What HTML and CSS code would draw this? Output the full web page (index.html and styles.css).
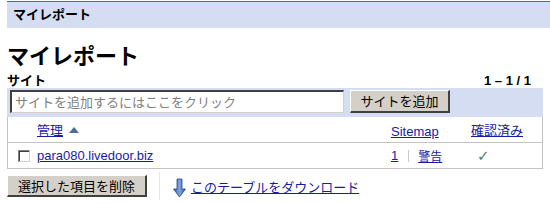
FILE: index.html
```html
<!DOCTYPE html>
<html lang="ja">
<head>
<meta charset="utf-8">
<title>マイレポート</title>
<link rel="stylesheet" href="styles.css">
</head>
<body>
<div class="topbar">マイレポート</div>
<main class="page">
  <h1 class="title">マイレポート</h1>
  <div class="subhead">
    <span class="subtitle">サイト</span>
    <span class="count">1 – 1 / 1</span>
  </div>
  <div class="addbar">
    <div class="input">サイトを追加するにはここをクリック</div>
    <button class="btn add-btn" type="button">サイトを追加</button>
  </div>
  <div class="table">
    <div class="row head">
      <div class="c-check"></div>
      <div class="c-name"><a href="#">管理</a><span class="sort"></span></div>
      <div class="c-sitemap"><a href="#">Sitemap</a></div>
      <div class="c-verified"><a href="#">確認済み</a></div>
    </div>
    <div class="row body">
      <div class="c-check"><span class="checkbox"></span></div>
      <div class="c-name"><a href="#">para080.livedoor.biz</a></div>
      <div class="c-sitemap"><a href="#">1</a><span class="sep"></span><a href="#" class="warn">警告</a></div>
      <div class="c-verified"><span class="tick">✓</span></div>
    </div>
  </div>
  <div class="actions">
    <button class="btn del-btn" type="button">選択した項目を削除</button>
    <span class="vsep"></span>
    <svg class="dl-icon" width="13" height="20" viewBox="0 0 13 20">
      <defs>
        <linearGradient id="g" x1="0" x2="1" y1="0" y2="0">
          <stop offset="0" stop-color="#2c5aa8"/>
          <stop offset="0.5" stop-color="#7ea6dc"/>
          <stop offset="1" stop-color="#2c5aa8"/>
        </linearGradient>
      </defs>
      <path d="M4 1 H9 V11 H12.5 L6.5 19 L0.5 11 H4 Z" fill="url(#g)" stroke="#1f4a8e" stroke-width="0.8"/>
    </svg>
    <a href="#" class="dl-link">このテーブルをダウンロード</a>
  </div>
</main>
</body>
</html>
```
FILE: styles.css
```css
* { box-sizing: border-box; }
html, body { margin: 0; padding: 0; background: #fff; }
body {
  font-family: "Liberation Sans", Arial, "Noto Sans CJK JP", sans-serif;
  font-size: 13px;
  color: #000;
}
a { color: #1a1aa8; text-decoration: underline; }

.topbar {
  margin: 1px 0 0 7px;
  height: 27px;
  border-top: 1px solid #4b6ea8;
  background: #d5ddf3;
  font-weight: bold;
  font-size: 13px;
  line-height: 26px;
  padding-left: 6px;
}

.page { margin: 0 7px; }

.title {
  margin: 15px 0 0;
  font-size: 22px;
  line-height: 28px;
  font-weight: bold;
}

.subhead {
  display: flex;
  justify-content: space-between;
  align-items: flex-end;
  font-weight: bold;
  line-height: 15px;
  margin-top: 2px;
}
.count { padding-right: 12px; }

.addbar {
  display: flex;
  align-items: center;
  gap: 6px;
  background: #d5ddf3;
  padding: 0 3px 3px 3px;
  height: 29px;
}
.input {
  width: 334px;
  height: 23px;
  background: #fff;
  border-top: 2px solid #404040;
  border-left: 2px solid #404040;
  border-right: 1px solid #d4d0c8;
  border-bottom: 1px solid #d4d0c8;
  color: #808080;
  line-height: 20px;
  padding-left: 3px;
  font-family: "Noto Sans CJK JP", sans-serif;
}
.btn {
  font-family: "Noto Sans CJK JP", sans-serif;
  font-size: 13px;
  background: #d4d0c8;
  border-top: 1px solid #fff;
  border-left: 1px solid #fff;
  border-right: 2px solid #404040;
  border-bottom: 2px solid #404040;
  padding: 0;
  color: #000;
  line-height: 18px;
}
.add-btn { width: 100px; height: 23px; margin-top: 1px; }

.table {
  border: 1px solid #c3c3c3;
  border-top: none;
}
.row {
  display: flex;
  align-items: center;
}
.row.head { height: 26px; border-bottom: 1px solid #c3c3c3; align-items: flex-end; padding-bottom: 3px; }
.row.body { height: 25px; }
.c-check { width: 29px; display: flex; justify-content: center; padding-left: 2px; }
.c-name { flex: 1; display: flex; align-items: center; }
.c-sitemap { width: 80px; display: flex; align-items: center; }
.c-verified { width: 71px; }
.head a, .c-name a { font-family: "Liberation Sans", "Noto Sans CJK JP", sans-serif; }
.sort {
  width: 0; height: 0;
  margin-left: 6px;
  border-left: 5px solid transparent;
  border-right: 5px solid transparent;
  border-bottom: 6px solid #4c6d9c;
}
.checkbox {
  width: 12px; height: 12px;
  border: 1px solid #808080;
  border-right-color: #d4d0c8;
  border-bottom-color: #d4d0c8;
  box-shadow: inset 1px 1px 0 #404040;
  background: #fff;
}
.sep {
  width: 1px; height: 12px;
  background: #c8c8c8;
  margin: 0 9px 0 10px;
}
.warn { font-size: 12px; }
.tick {
  color: #4f8264;
  font-family: "DejaVu Sans", sans-serif;
  font-size: 15px;
  padding-left: 6px;
}

.actions {
  display: flex;
  align-items: center;
  margin-top: 3px;
  height: 28px;
}
.del-btn { width: 140px; height: 22px; }
.vsep { width: 1px; height: 28px; background: #e4e4e4; margin: 0 13px 0 12px; }
.dl-icon { margin-right: 5px; margin-top: 4px; }
.dl-link { font-family: "Noto Sans CJK JP", sans-serif; }
```
